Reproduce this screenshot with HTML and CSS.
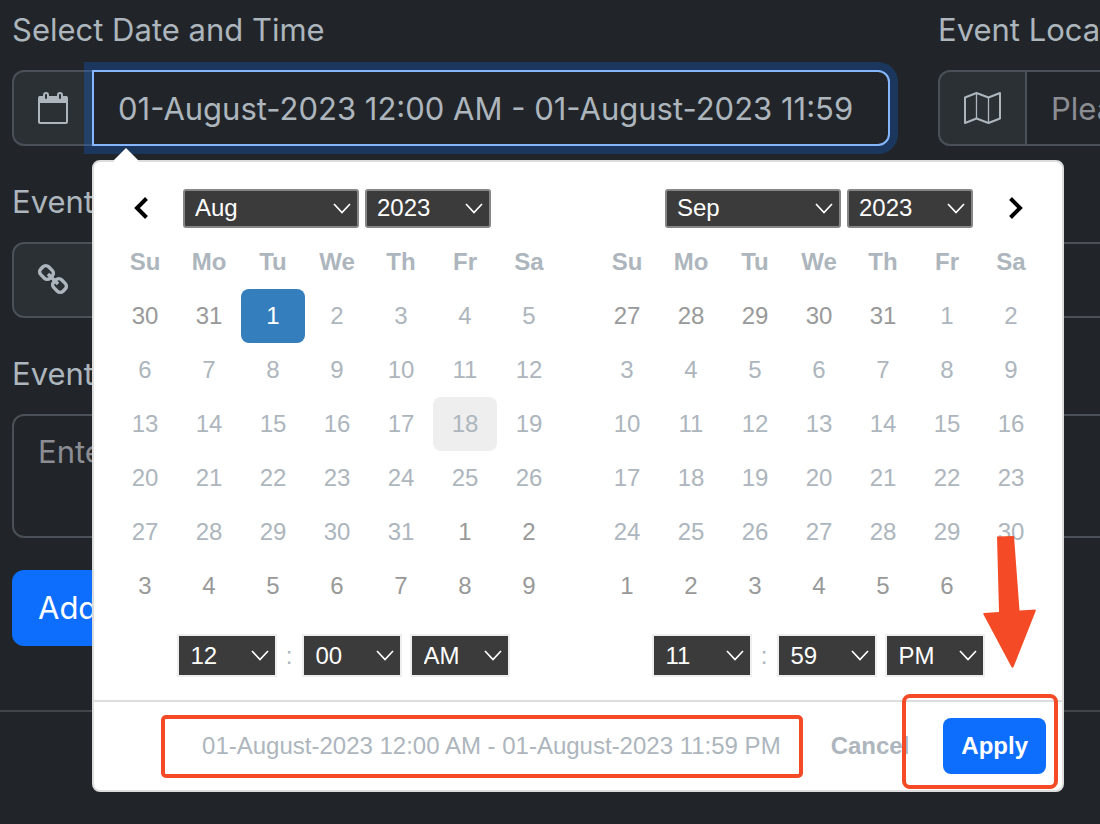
FILE: index.html
```html
<!DOCTYPE html>
<html lang="en">
<head>
<meta charset="utf-8">
<title>Event form</title>
<link rel="stylesheet" href="styles.css">
</head>
<body>
<svg class="sprite" aria-hidden="true">
  <symbol id="chevron" viewBox="0 0 18 11"><path d="M1 1l8 8.500L17 1" fill="none" stroke="currentColor" stroke-width="1.700"/></symbol>
</svg>
<form class="form">
  <div class="field">
    <label for="when">Select Date and Time</label>
    <div class="input-group">
      <span class="addon">
        <svg width="30" height="34" viewBox="0 0 30 34" fill="none" stroke="currentColor">
          <rect x="1" y="6" width="28" height="26" rx="1" stroke-width="2"/>
          <path d="M1 5h28v7H1z" fill="currentColor" stroke="none"/>
          <rect x="6" y="2" width="4" height="7" rx="2" fill="#2b3035" stroke-width="2"/>
          <rect x="20" y="2" width="4" height="7" rx="2" fill="#2b3035" stroke-width="2"/>
        </svg>
      </span>
      <input class="control focused" id="when" type="text" value="01-August-2023 12:00 AM - 01-August-2023 11:59 PM">

      <div class="picker">
        <svg class="picker-caret" width="24" height="14" viewBox="0 0 24 14"><path d="M0 14V12L12 0l12 12v2z" fill="#fff"/></svg>
        <div class="calendars">
          <div class="panel panel-start">
            <table class="calendar">
              <thead>
                <tr>
                  <th><button class="nav" type="button" aria-label="Previous month"><svg width="24" height="24" viewBox="0 0 24 24"><path d="M13.500 2.500L4 12l9.500 9.500" fill="none" stroke="currentColor" stroke-width="4"/></svg></button></th>
                  <th colspan="5">
                    <div class="selects">
                      <span class="select month"><select aria-label="Month"><option>Aug</option></select><svg><use href="#chevron"/></svg></span>
                      <span class="select year"><select aria-label="Year"><option>2023</option></select><svg><use href="#chevron"/></svg></span>
                    </div>
                  </th>
                  <th></th>
                </tr>
                <tr><th>Su</th><th>Mo</th><th>Tu</th><th>We</th><th>Th</th><th>Fr</th><th>Sa</th></tr>
              </thead>
              <tbody>
                <tr><td class="off">30</td><td class="off">31</td><td class="active">1</td><td>2</td><td>3</td><td>4</td><td>5</td></tr>
                <tr><td>6</td><td>7</td><td>8</td><td>9</td><td>10</td><td>11</td><td>12</td></tr>
                <tr><td>13</td><td>14</td><td>15</td><td>16</td><td>17</td><td class="hovered">18</td><td>19</td></tr>
                <tr><td>20</td><td>21</td><td>22</td><td>23</td><td>24</td><td>25</td><td>26</td></tr>
                <tr><td>27</td><td>28</td><td>29</td><td>30</td><td>31</td><td class="off">1</td><td class="off">2</td></tr>
                <tr><td class="off">3</td><td class="off">4</td><td class="off">5</td><td class="off">6</td><td class="off">7</td><td class="off">8</td><td class="off">9</td></tr>
              </tbody>
            </table>
            <div class="time">
              <span class="select"><select aria-label="Start hour"><option>12</option></select><svg><use href="#chevron"/></svg></span>
              <span class="colon">:</span>
              <span class="select"><select aria-label="Start minute"><option>00</option></select><svg><use href="#chevron"/></svg></span>
              <span class="select meridiem"><select aria-label="Start AM or PM"><option>AM</option></select><svg><use href="#chevron"/></svg></span>
            </div>
          </div>
          <div class="panel panel-end">
            <table class="calendar">
              <thead>
                <tr>
                  <th></th>
                  <th colspan="5">
                    <div class="selects">
                      <span class="select month"><select aria-label="Month"><option>Sep</option></select><svg><use href="#chevron"/></svg></span>
                      <span class="select year"><select aria-label="Year"><option>2023</option></select><svg><use href="#chevron"/></svg></span>
                    </div>
                  </th>
                  <th><button class="nav" type="button" aria-label="Next month"><svg width="24" height="24" viewBox="0 0 24 24"><path d="M11.500 2.500L21 12l-9.500 9.500" fill="none" stroke="currentColor" stroke-width="4"/></svg></button></th>
                </tr>
                <tr><th>Su</th><th>Mo</th><th>Tu</th><th>We</th><th>Th</th><th>Fr</th><th>Sa</th></tr>
              </thead>
              <tbody>
                <tr><td class="off">27</td><td class="off">28</td><td class="off">29</td><td class="off">30</td><td class="off">31</td><td>1</td><td>2</td></tr>
                <tr><td>3</td><td>4</td><td>5</td><td>6</td><td>7</td><td>8</td><td>9</td></tr>
                <tr><td>10</td><td>11</td><td>12</td><td>13</td><td>14</td><td>15</td><td>16</td></tr>
                <tr><td>17</td><td>18</td><td>19</td><td>20</td><td>21</td><td>22</td><td>23</td></tr>
                <tr><td>24</td><td>25</td><td>26</td><td>27</td><td>28</td><td>29</td><td>30</td></tr>
                <tr><td class="off">1</td><td class="off">2</td><td class="off">3</td><td class="off">4</td><td class="off">5</td><td class="off">6</td><td></td></tr>
              </tbody>
            </table>
            <div class="time">
              <span class="select"><select aria-label="End hour"><option>11</option></select><svg><use href="#chevron"/></svg></span>
              <span class="colon">:</span>
              <span class="select"><select aria-label="End minute"><option>59</option></select><svg><use href="#chevron"/></svg></span>
              <span class="select meridiem"><select aria-label="End AM or PM"><option>PM</option></select><svg><use href="#chevron"/></svg></span>
            </div>
          </div>
        </div>
        <div class="picker-footer">
          <span class="summary">01-August-2023 12:00 AM - 01-August-2023 11:59 PM</span>
          <button class="cancel" type="button">Cancel</button>
          <button class="apply" type="button">Apply</button>
        </div>
        <div class="mark mark-summary"></div>
        <div class="mark mark-apply"></div>
        <svg class="mark-arrow" width="54" height="134" viewBox="0 0 54 134"><path d="M15 2.500L32 2L37.500 76.500L53.500 75.500Q54 76 53.500 77.500L31.500 133Q30.500 134.500 29.500 133L1.500 80.500Q1 79 2 79L17 78z" fill="#f54a26"/></svg>
      </div>
    </div>
  </div>

  <div class="field">
    <label for="where">Event Location</label>
    <div class="input-group">
      <span class="addon">
        <svg width="37" height="34" viewBox="0 0 37 34" fill="none" stroke="currentColor" stroke-width="2" stroke-linejoin="round">
          <path d="M12.500 2v25.500M24.500 6.500V32" stroke-width="1.300"/>
          <path d="M1 6.500L12.500 2l12 4.500L36 2v25.500L24.500 32l-12-4.500L1 32z"/>
        </svg>
      </span>
      <input class="control" id="where" type="text" placeholder="Please">
    </div>
  </div>

  <div class="field wide">
    <label for="link">Event</label>
    <div class="input-group">
      <span class="addon">
        <svg width="30" height="34" viewBox="0 0 30 34" fill="none" stroke="currentColor" stroke-width="3.500">
          <rect x="-6.500" y="-5.500" width="13" height="11" rx="4" transform="translate(8.500 9.500) rotate(45)"/>
          <rect x="-6.500" y="-5.500" width="13" height="11" rx="4" transform="translate(21.500 22.500) rotate(45)"/>
          <path d="M10 11l10 10"/>
        </svg>
      </span>
      <input class="control" id="link" type="text">
    </div>
  </div>

  <div class="field wide">
    <label for="about">Event</label>
    <textarea class="control area" id="about" placeholder="Enter"></textarea>
  </div>

  <button class="submit" type="button">Add</button>
</form>
<hr class="rule">
</body>
</html>
```
FILE: styles.css
```css
* {
  box-sizing: border-box;
}

body {
  margin: 0;
  min-height: 100vh;
  overflow: hidden;
  background: #212529;
  color: #adb5bd;
  font-family: Inter, "Noto Sans", sans-serif;
  font-size: 31px;
  line-height: 48px;
}

button,
input,
select,
textarea {
  font: inherit;
  color: inherit;
}

.sprite {
  display: none;
}

.form {
  display: grid;
  grid-template-columns: repeat(2, calc(100% - 210px));
  gap: 32px 48px;
  padding: 6px 0 0 12px;
}

.field {
  display: flex;
  flex-direction: column;
  gap: 16px;
}

.wide {
  grid-column: span 2;
}

.input-group {
  position: relative;
  display: flex;
}

.addon {
  display: flex;
  align-items: center;
  padding: 0 24px;
  background: #2b3035;
  border: 2px solid #495057;
  border-radius: 12px 0 0 12px;
}

.control {
  flex: 1;
  min-width: 0;
  height: 76px;
  margin-left: -2px;
  padding: 12px 28px 12px 24px;
  background: #212529;
  border: 2px solid #495057;
  border-radius: 0 12px 12px 0;
  outline: none;
}

.control::placeholder {
  color: #8b8d93;
}

.focused {
  border-color: #86b7fe;
  box-shadow: 0 0 0 8px rgba(13, 110, 253, 0.25);
}

.area {
  flex: none;
  height: 124px;
  margin-left: 0;
  border-radius: 12px;
  resize: none;
}

.submit {
  justify-self: start;
  height: 76px;
  padding: 0 26px;
  background: #0d6efd;
  border: 0;
  border-radius: 12px;
  color: #fff;
}

.rule {
  height: 2px;
  margin: 64px 0 0;
  background: #424649;
  border: 0;
}

/* Date range picker */
.picker {
  position: absolute;
  z-index: 2;
  top: 90px;
  left: 80px;
  background: #fff;
  border: 2px solid #ddd;
  border-radius: 8px;
  font-family: "Liberation Sans", Arial, sans-serif;
  font-size: 24px;
  line-height: 28px;
}

.picker-caret {
  position: absolute;
  top: -14px;
  left: 20px;
}

.calendars {
  display: flex;
  gap: 16px;
  padding: 19px 15px 23px 19px;
}

.panel-start {
  width: 466px;
}

.panel-end {
  width: 452px;
}

.calendar {
  width: 448px;
  table-layout: fixed;
  border-collapse: separate;
  border-spacing: 0;
}

.calendar th,
.calendar td {
  height: 54px;
  padding: 0;
  border-radius: 8px;
  text-align: center;
}

.calendar .off {
  color: #999;
}

.calendar .active {
  background: #357ebd;
  color: #fff;
}

.calendar .hovered {
  background: #eee;
}

.nav {
  display: block;
  width: 100%;
  height: 24px;
  padding: 0;
  background: none;
  border: 0;
  color: #000;
}

.selects {
  display: flex;
  justify-content: center;
  gap: 6px;
  font-weight: 400;
}

.select {
  display: grid;
  align-items: center;
  width: 100px;
  color: #fff;
}

.select select,
.select svg {
  grid-area: 1 / 1;
}

.select select {
  appearance: none;
  width: 100%;
  height: 43px;
  padding: 0 0 0 12px;
  background: #3b3b3b;
  border: 2px solid #eee;
  border-radius: 0;
}

.select svg {
  justify-self: end;
  width: 18px;
  height: 11px;
  margin-right: 8px;
  pointer-events: none;
}

.month {
  width: 176px;
}

.year {
  width: 126px;
}

.selects select {
  height: 39px;
  padding-left: 10px;
  border-color: #868686;
  border-radius: 3px;
}

.time {
  display: flex;
  justify-content: center;
  align-items: center;
  padding: 21px 6px 0 0;
}

.colon {
  width: 25px;
  text-align: center;
}

.meridiem {
  margin-left: 8px;
}

.picker-footer {
  display: flex;
  justify-content: flex-end;
  align-items: center;
  gap: 16px;
  padding: 16px;
  border-top: 2px solid #ddd;
}

.summary {
  padding-right: 16px;
  white-space: nowrap;
}

.cancel,
.apply {
  height: 56px;
  padding: 0 18px;
  border: 0;
  border-radius: 8px;
  background: none;
  font-weight: 700;
}

.apply {
  background: #0d6efd;
  color: #fff;
}

/* Highlights drawn over the picker */
.mark {
  position: absolute;
  border: 4px solid #f54a26;
  border-radius: 8px;
  pointer-events: none;
}

.mark-summary {
  top: 553px;
  left: 67px;
  width: 642px;
  height: 63px;
  border-radius: 5px;
}

.mark-apply {
  top: 532px;
  left: 808px;
  width: 156px;
  height: 95px;
}

.mark-arrow {
  position: absolute;
  top: 372px;
  left: 888px;
}
```
